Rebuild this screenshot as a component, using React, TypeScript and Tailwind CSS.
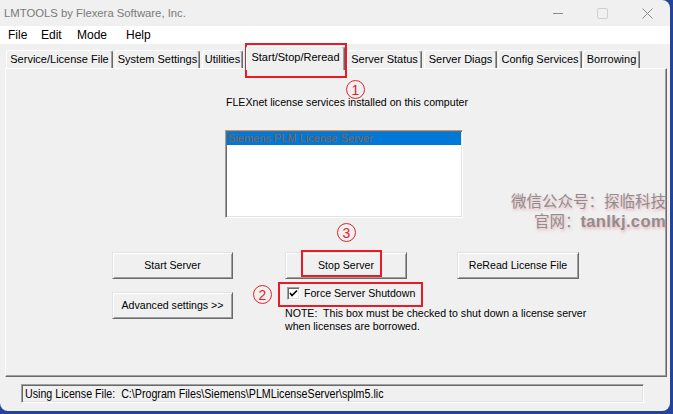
import React from "react";

const raised =
  "border border-t-[#e3e3e3] border-l-[#e3e3e3] border-r-[#696969] border-b-[#696969] shadow-[inset_1px_1px_0_#ffffff,inset_-1px_-1px_0_#a0a0a0] bg-[#f0f0f0]";
const sunken =
  "border border-t-[#a0a0a0] border-l-[#a0a0a0] border-r-[#ffffff] border-b-[#ffffff] shadow-[inset_1px_1px_0_#696969,inset_-1px_-1px_0_#e3e3e3]";
const tabBase =
  "flex items-center justify-center border-t border-l border-r border-t-white border-l-white border-r-[#696969] shadow-[inset_-1px_0_0_#a0a0a0] rounded-t-[3px] bg-[#f0f0f0] text-[11px] leading-none text-black whitespace-nowrap";

function Circ({ n, cls }: { n: string; cls: string }) {
  return (
    <div
      className={
        "absolute w-[19px] h-[19px] rounded-full border-[1.5px] border-[#e3232c] text-[#e3232c] flex items-center justify-center text-[14px] leading-none " +
        cls
      }
    >
      {n}
    </div>
  );
}

export default function App() {
  const tabs: { t: string; w: string; ml: string; sel?: boolean }[] = [
    { t: "Service/License File", w: "w-[107px]", ml: "ml-[6px]" },
    { t: "System Settings", w: "w-[85px]", ml: "ml-[2px]" },
    { t: "Utilities", w: "w-[41px]", ml: "ml-[2px]" },
    { t: "Start/Stop/Reread", w: "w-[99px]", ml: "ml-[3px]", sel: true },
    { t: "Server Status", w: "w-[75px]", ml: "ml-[2px]" },
    { t: "Server Diags", w: "w-[73px]", ml: "ml-[2px]" },
    { t: "Config Services", w: "w-[84px]", ml: "ml-[1px]" },
    { t: "Borrowing", w: "w-[57px]", ml: "ml-[1px]" },
  ];
  return (
    <div className="w-[673px] h-[414px] bg-[#23449a] overflow-hidden font-['Liberation_Sans',Arial,sans-serif]">
      <div className="relative w-[670px] h-[411px] bg-[#f0f0f0] rounded-tr-[8px] rounded-b-[8px] overflow-hidden flex flex-col">
        {/* Title bar */}
        <div className="h-[26px] flex items-center shrink-0">
          <div className="ml-[4px] text-[11.3px] text-[#7a7a7a] whitespace-nowrap">
            LMTOOLS by Flexera Software, Inc.
          </div>
          <div className="flex-1" />
          <div className="w-[45px] h-[26px] flex items-center justify-center">
            <svg width="10" height="10" viewBox="0 0 10 10">
              <line x1="0" y1="5.5" x2="10" y2="5.5" stroke="#8a8a8a" strokeWidth="1" />
            </svg>
          </div>
          <div className="w-[45px] h-[26px] flex items-center justify-center">
            <svg width="11" height="11" viewBox="0 0 11 11">
              <rect x="0.5" y="0.5" width="10" height="10" rx="1.5" fill="none" stroke="#cfcfcf" strokeWidth="1" />
            </svg>
          </div>
          <div className="w-[45px] h-[26px] flex items-center justify-center">
            <svg width="11" height="11" viewBox="0 0 11 11">
              <path d="M0.5 0.5 L10.5 10.5 M10.5 0.5 L0.5 10.5" stroke="#8a8a8a" strokeWidth="1" />
            </svg>
          </div>
        </div>
        {/* Menu bar */}
        <div className="h-[18px] bg-white flex items-center pl-[8px] text-[12px] text-black shrink-0">
          <span className="w-[33px]">File</span>
          <span className="w-[36px]">Edit</span>
          <span className="w-[49px]">Mode</span>
          <span>Help</span>
        </div>
        {/* Tabs */}
        <div className="mt-[2px] h-[24px] flex items-end -mb-[2px] relative z-10 shrink-0">
          {tabs.map((tb) =>
            tb.sel ? (
              <div key={tb.t} className={tabBase + " h-[24px] pb-[2px] " + tb.w + " " + tb.ml}>
                {tb.t}
              </div>
            ) : (
              <div key={tb.t} className={tabBase + " h-[18px] mb-[2px] " + tb.w + " " + tb.ml}>
                {tb.t}
              </div>
            )
          )}
        </div>
        {/* Panel */}
        <div className="h-[309px] w-[662px] ml-[5px] border-t border-l border-r border-b border-t-white border-l-white border-r-[#696969] border-b-[#696969] shadow-[inset_-1px_-1px_0_#a0a0a0] flex flex-col text-[10.6px] text-black shrink-0">
          <div className="mt-[27px] ml-[220px] h-[13px] leading-[13px] whitespace-nowrap">
            FLEXnet license services installed on this computer
          </div>
          <div className={"mt-[21px] ml-[219px] w-[238px] h-[88px] bg-white pt-[1px] pl-[1px] pr-[1px] " + sunken}>
            <div className="h-[13px] bg-[#0078d7] text-[#8a6140] text-[11px] leading-[13px] pl-[1px] whitespace-nowrap">
              Siemens PLM License Server
            </div>
          </div>
          <div className="mt-[34px] flex">
            <div className={"ml-[106px] w-[121px] h-[27px] flex items-center justify-center " + raised}>Start Server</div>
            <div className={"ml-[52px] w-[122px] h-[27px] flex items-center justify-center " + raised}>Stop Server</div>
            <div className={"ml-[50px] w-[122px] h-[27px] flex items-center justify-center " + raised}>ReRead License File</div>
          </div>
          <div className="mt-[8px] flex items-start">
            <div className={"mt-[5px] ml-[106px] w-[121px] h-[27px] flex items-center justify-center " + raised}>
              Advanced settings &gt;&gt;
            </div>
            <div className="ml-[52px] flex flex-col">
              <div className="flex items-center h-[13px]">
                <div className={"ml-[2px] w-[13px] h-[13px] bg-white flex items-center justify-center " + sunken}>
                  <svg width="9" height="9" viewBox="0 0 9 9">
                    <path d="M1 4 L3 6.5 L8 1.5" fill="none" stroke="#000" strokeWidth="1.6" />
                  </svg>
                </div>
                <span className="ml-[4px] whitespace-nowrap">Force Server Shutdown</span>
              </div>
              <div className="mt-[7px] leading-[13px] whitespace-pre">
                {"NOTE:  This box must be checked to shut down a license server"}
              </div>
              <div className="leading-[13px] whitespace-pre">when licenses are borrowed.</div>
            </div>
          </div>
        </div>
        {/* Status */}
        <div className={"mt-[7px] ml-[21px] w-[623px] h-[19px] flex items-center pl-[3px] overflow-hidden shrink-0 " + sunken}>
          <span className="text-[12px] text-black whitespace-pre origin-left scale-x-[0.89] inline-block">
            {"Using License File:  C:\\Program Files\\Siemens\\PLMLicenseServer\\splm5.lic"}
          </span>
        </div>

        {/* Watermark */}
        <div className="absolute right-[4px] top-[191px] text-right text-[#8e8e8e] font-['Noto_Sans_CJK_SC',sans-serif] [text-shadow:1px_2px_3px_rgba(235,120,140,0.55)]">
          <div className="h-[19px] leading-[19px] text-[15.5px] whitespace-nowrap">微信公众号：探临科技</div>
          <div className="h-[20px] leading-[20px] text-[15.5px] whitespace-nowrap">
            官网：<span className="font-bold text-[16.5px] tracking-[0.4px] font-['Liberation_Sans',sans-serif]">tanlkj.com</span>
          </div>
        </div>

        {/* Annotations */}
        <div className="absolute left-[245px] top-[43px] w-[102px] h-[35px] border-2 border-[#e81c24]" />
        <div className="absolute left-[301px] top-[250px] w-[81px] h-[27px] border-2 border-[#e81c24]" />
        <div className="absolute left-[278px] top-[282px] w-[145px] h-[25px] border-2 border-[#e81c24]" />
        <Circ n="1" cls="left-[346px] top-[80px]" />
        <Circ n="3" cls="left-[337px] top-[223px]" />
        <Circ n="2" cls="left-[253px] top-[285px]" />
      </div>
    </div>
  );
}
